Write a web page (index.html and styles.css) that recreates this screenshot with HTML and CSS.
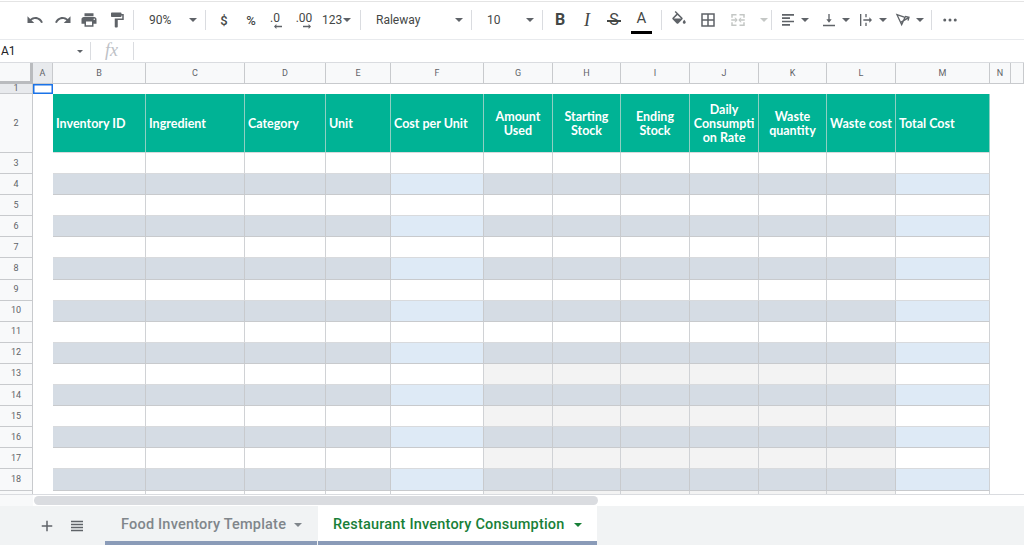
FILE: index.html
```html
<!DOCTYPE html>
<html lang="en">
<head>
	<meta charset="UTF-8">
	<title>Restaurant Inventory Consumption</title>
	<link rel="stylesheet" href="styles.css">
</head>
<body>
	<div class="toolbar">
		<span class="tb w28"><svg viewBox="0 0 24 24" class="ico"><path d="M12.5 8c-2.65 0-5.05.99-6.9 2.6L2 7v9h9l-3.62-3.62c1.39-1.16 3.16-1.88 5.12-1.88 3.54 0 6.55 2.31 7.6 5.5l2.37-.78C21.08 11.03 17.15 8 12.5 8z"/></svg></span>
		<span class="tb w28"><svg viewBox="0 0 24 24" class="ico"><path d="M18.4 10.6C16.55 8.99 14.15 8 11.5 8c-4.65 0-8.58 3.03-9.96 7.22L3.9 16c1.05-3.19 4.05-5.5 7.6-5.5 1.95 0 3.73.72 5.12 1.88L13 16h9V7l-3.6 3.6z"/></svg></span>
		<span class="tb w24"><svg viewBox="0 0 24 24" class="ico"><path d="M19 8H5c-1.66 0-3 1.34-3 3v6h4v4h12v-4h4v-6c0-1.66-1.34-3-3-3zm-3 11H8v-5h8v5zm3-7c-.55 0-1-.45-1-1s.45-1 1-1 1 .45 1 1-.45 1-1 1zm-1-9H6v4h12V3z"/></svg></span>
		<span class="tb w32"><svg viewBox="0 0 24 24" class="ico"><path d="M18 4V3c0-.55-.45-1-1-1H5c-.55 0-1 .45-1 1v4c0 .55.45 1 1 1h12c.55 0 1-.45 1-1V6h1v4H9v11c0 .55.45 1 1 1h2c.55 0 1-.45 1-1v-9h8V4h-3z"/></svg></span>
		<span class="sep"></span>
		<span class="tb drop w72">90%<i class="caret"></i></span>
		<span class="sep"></span>
		<span class="tb w36 sym">$</span>
		<span class="tb w18 sym">%</span>
		<span class="tb w30 dec">.0<svg viewBox="0 0 10 6" class="dec-arrow left"><path d="M0 3l3-3v2h7v2H3v2z"/></svg></span>
		<span class="tb w28 dec">.00<svg viewBox="0 0 10 6" class="dec-arrow right"><path d="M10 3L7 0v2H0v2h7v2z"/></svg></span>
		<span class="tb w42 num">123<i class="caret"></i></span>
		<span class="sep"></span>
		<span class="tb drop w110">Raleway<i class="caret"></i></span>
		<span class="sep"></span>
		<span class="tb drop w70">10<i class="caret"></i></span>
		<span class="sep"></span>
		<span class="tb w34 letter bold">B</span>
		<span class="tb w20 letter slant">I</span>
		<span class="tb w34 letter strike">S</span>
		<span class="tb w21 letter color">A</span>
		<span class="sep gap9"></span>
		<span class="tb w34"><svg viewBox="0 0 24 24" class="ico"><path d="M16.56 8.94L7.62 0 6.21 1.41l2.38 2.38-5.15 5.15c-.59.59-.59 1.54 0 2.12l5.5 5.5c.29.29.68.44 1.06.44s.77-.15 1.06-.44l5.5-5.5c.59-.58.59-1.53 0-2.12zM5.21 10L10 5.21 14.79 10H5.21zM19 11.5s-2 2.17-2 3.5c0 1.1.9 2 2 2s2-.9 2-2c0-1.33-2-3.5-2-3.5z"/></svg></span>
		<span class="tb w24"><svg viewBox="0 0 24 24" class="ico"><path d="M3 3v18h18V3H3zm8 16H5v-6h6v6zm0-8H5V5h6v6zm8 8h-6v-6h6v6zm0-8h-6V5h6v6z"/></svg></span>
		<span class="tb w36"><svg viewBox="0 0 24 24" class="ico off"><path d="M3 4h7v2H5v3H3zM14 4h7v5h-2V6h-5zM3 15h2v3h5v2H3zM19 15h2v5h-7v-2h5zM3 11h6l-2-2h2l2.500 3L9 15H7l2-2H3zM21 11h-6l2-2h-2l-2.500 3 2.500 3h2l-2-2h6z"/></svg></span>
		<span class="tb w15"><i class="caret off"></i></span>
		<span class="sep"></span>
		<span class="tb w41 pair"><svg viewBox="0 0 24 24" class="ico"><path d="M3 3h18v2.500H3zM3 8h12v2.500H3zM3 13h18v2.500H3zM3 18h12v2.500H3z"/></svg><i class="caret"></i></span>
		<span class="tb w37 pair"><svg viewBox="0 0 24 24" class="ico"><path d="M3 19h18v2.500H3zM11 3h2v8h3l-4 5-4-5h3z"/></svg><i class="caret"></i></span>
		<span class="tb w37 pair"><svg viewBox="0 0 24 24" class="ico"><path d="M3 3h2v18H3zM11 3h2v5h-2zM11 16h2v5h-2zM8 11h9V8l4 4-4 4v-3H8z"/></svg><i class="caret"></i></span>
		<span class="tb w44 pair"><svg viewBox="0 0 24 24" class="ico line"><path d="M15 8L3 4l7 15zM8 16L21 8M15 6.500L21 8l-1.500 5"/></svg><i class="caret"></i></span>
		<span class="sep"></span>
		<span class="tb w36"><svg viewBox="0 0 24 24" class="ico"><circle cx="5" cy="12" r="2"/><circle cx="12" cy="12" r="2"/><circle cx="19" cy="12" r="2"/></svg></span>
	</div>

	<div class="formula">
		<span class="name-box">A1<i class="caret small"></i></span>
		<span class="fx">fx</span>
	</div>

	<div class="sheet">
		<table class="grid">
			<colgroup>
				<col class="c-head"><col class="c-a"><col class="c-b"><col class="c-c"><col class="c-d"><col class="c-e"><col class="c-f"><col class="c-g"><col class="c-h"><col class="c-i"><col class="c-j"><col class="c-k"><col class="c-l"><col class="c-m"><col class="c-n"><col class="c-rest">
			</colgroup>
			<thead>
				<tr><th class="corner"></th><th class="on">A</th><th>B</th><th>C</th><th>D</th><th>E</th><th>F</th><th>G</th><th>H</th><th>I</th><th>J</th><th>K</th><th>L</th><th>M</th><th>N</th><th></th></tr>
			</thead>
			<tbody>
				<tr class="first"><th class="on">1</th><td class="sel"></td><td></td><td></td><td></td><td></td><td></td><td></td><td></td><td></td><td></td><td></td><td></td><td></td><td></td><td></td></tr>
				<tr class="title"><th>2</th><td></td><td>Inventory ID</td><td>Ingredient</td><td>Category</td><td>Unit</td><td>Cost per Unit</td><td class="mid">Amount Used</td><td class="mid">Starting Stock</td><td class="mid">Ending Stock</td><td class="mid">Daily Consumpti on Rate</td><td class="mid">Waste quantity</td><td class="mid">Waste cost</td><td>Total Cost</td><td></td><td></td></tr>
				<tr><th>3</th><td></td><td></td><td></td><td></td><td></td><td></td><td></td><td></td><td></td><td></td><td></td><td></td><td></td><td></td><td></td></tr>
				<tr><th>4</th><td></td><td></td><td></td><td></td><td></td><td></td><td></td><td></td><td></td><td></td><td></td><td></td><td></td><td></td><td></td></tr>
				<tr><th>5</th><td></td><td></td><td></td><td></td><td></td><td></td><td></td><td></td><td></td><td></td><td></td><td></td><td></td><td></td><td></td></tr>
				<tr><th>6</th><td></td><td></td><td></td><td></td><td></td><td></td><td></td><td></td><td></td><td></td><td></td><td></td><td></td><td></td><td></td></tr>
				<tr><th>7</th><td></td><td></td><td></td><td></td><td></td><td></td><td></td><td></td><td></td><td></td><td></td><td></td><td></td><td></td><td></td></tr>
				<tr><th>8</th><td></td><td></td><td></td><td></td><td></td><td></td><td></td><td></td><td></td><td></td><td></td><td></td><td></td><td></td><td></td></tr>
				<tr><th>9</th><td></td><td></td><td></td><td></td><td></td><td></td><td></td><td></td><td></td><td></td><td></td><td></td><td></td><td></td><td></td></tr>
				<tr><th>10</th><td></td><td></td><td></td><td></td><td></td><td></td><td></td><td></td><td></td><td></td><td></td><td></td><td></td><td></td><td></td></tr>
				<tr><th>11</th><td></td><td></td><td></td><td></td><td></td><td></td><td></td><td></td><td></td><td></td><td></td><td></td><td></td><td></td><td></td></tr>
				<tr><th>12</th><td></td><td></td><td></td><td></td><td></td><td></td><td></td><td></td><td></td><td></td><td></td><td></td><td></td><td></td><td></td></tr>
				<tr><th>13</th><td></td><td></td><td></td><td></td><td></td><td></td><td></td><td></td><td></td><td></td><td></td><td></td><td></td><td></td><td></td></tr>
				<tr><th>14</th><td></td><td></td><td></td><td></td><td></td><td></td><td></td><td></td><td></td><td></td><td></td><td></td><td></td><td></td><td></td></tr>
				<tr><th>15</th><td></td><td></td><td></td><td></td><td></td><td></td><td></td><td></td><td></td><td></td><td></td><td></td><td></td><td></td><td></td></tr>
				<tr><th>16</th><td></td><td></td><td></td><td></td><td></td><td></td><td></td><td></td><td></td><td></td><td></td><td></td><td></td><td></td><td></td></tr>
				<tr><th>17</th><td></td><td></td><td></td><td></td><td></td><td></td><td></td><td></td><td></td><td></td><td></td><td></td><td></td><td></td><td></td></tr>
				<tr><th>18</th><td></td><td></td><td></td><td></td><td></td><td></td><td></td><td></td><td></td><td></td><td></td><td></td><td></td><td></td><td></td></tr>
				<tr><th></th><td></td><td></td><td></td><td></td><td></td><td></td><td></td><td></td><td></td><td></td><td></td><td></td><td></td><td></td><td></td></tr>
			</tbody>
		</table>
	</div>

	<div class="scroll-strip"><span class="scroll-head"></span><span class="thumb"></span></div>

	<div class="tabs">
		<span class="tab-tool plus"><svg viewBox="0 0 24 24" class="ico"><path d="M19 13h-6v6h-2v-6H5v-2h6V5h2v6h6z"/></svg></span>
		<span class="tab-tool list"><svg viewBox="0 0 24 24" class="ico"><path d="M4 5h16v2H4zM4 9h16v2H4zM4 13h16v2H4zM4 17h16v2H4z"/></svg></span>
		<span class="tab">Food Inventory Template<i class="caret"></i></span>
		<span class="tab active">Restaurant Inventory Consumption<i class="caret"></i></span>
	</div>
</body>
</html>
```

FILE: styles.css
```css
html, body {
	margin: 0;
	height: 545px;
	overflow: hidden;
	background: #fff;
	font-family: Roboto, "Liberation Sans", sans-serif;
	color: #444746;
}
body {
	display: flex;
	flex-direction: column;
}

/* toolbar */
.toolbar {
	display: flex;
	align-items: center;
	height: 36px;
	flex: none;
	margin-top: 1px;
	padding: 0 0 1px 21px;
	border-top: 1px solid #e4e4e4;
	border-bottom: 1px solid #e8eaed;
	box-sizing: content-box;
	font-size: 12px;
}
.tb {
	display: flex;
	align-items: center;
	justify-content: center;
	flex: none;
	height: 24px;
	color: #444746;
}
.w15 { width: 15px; }
.w18 { width: 18px; }
.w20 { width: 20px; }
.w21 { width: 21px; }
.w24 { width: 24px; }
.w28 { width: 28px; }
.w30 { width: 30px; }
.w32 { width: 32px; }
.w34 { width: 34px; }
.w36 { width: 36px; }
.w37 { width: 37px; }
.w41 { width: 41px; }
.w42 { width: 42px; }
.w44 { width: 44px; }
.w70 { width: 70px; }
.w72 { width: 71px; }
.w110 { width: 110px; }
.ico {
	width: 18px;
	height: 18px;
	fill: #5f6368;
}
.ico.off {
	fill: #c4c7c5;
}
.ico.line {
	fill: none;
	stroke: #5f6368;
	stroke-width: 2;
}
.sep {
	flex: none;
	width: 1px;
	height: 20px;
	background: #dadce0;
}
.sep.gap9 {
	margin-left: 9px;
}
.caret {
	display: inline-block;
	width: 0;
	height: 0;
	border-left: 4px solid transparent;
	border-right: 4px solid transparent;
	border-top: 4px solid #5f6368;
}
.caret.off {
	border-top-color: #c4c7c5;
}
.caret.small {
	border-left-width: 3px;
	border-right-width: 3px;
	border-top-width: 3px;
}
.drop {
	justify-content: space-between;
	padding: 0 8px 0 15px;
	box-sizing: border-box;
}
.sym {
	font-size: 13px;
	font-weight: 500;
}
.dec {
	flex-direction: column;
	font-size: 12px;
	line-height: 12px;
	font-weight: 400;
}
.dec-arrow {
	width: 8px;
	height: 5px;
	fill: #5f6368;
}
.dec-arrow.left {
	margin-left: 6px;
}
.dec-arrow.right {
	margin-left: 6px;
}
.num {
	justify-content: flex-start;
	gap: 1px;
	padding-left: 4px;
	box-sizing: border-box;
}
.letter {
	font-size: 15px;
	line-height: 18px;
}
.bold {
	font-size: 16px;
	font-weight: 700;
}
.slant {
	font-family: "Liberation Serif", serif;
	font-style: italic;
	font-size: 18px;
	font-weight: 400;
}
.strike {
	position: relative;
	font-size: 16px;
}
.strike::after {
	content: "";
	position: absolute;
	left: 10px;
	right: 10px;
	top: 12px;
	height: 1.500px;
	background: #444746;
}
.color {
	height: 24px;
	margin-top: 4px;
	align-items: flex-start;
	border-bottom: 3px solid #000;
	box-sizing: border-box;
	line-height: 16px;
}
.pair {
	justify-content: flex-start;
	gap: 5px;
	padding-left: 8px;
	box-sizing: border-box;
}
.pair .ico {
	width: 16px;
	height: 16px;
}

/* formula bar */
.formula {
	display: flex;
	align-items: center;
	flex: none;
	height: 22px;
	border-bottom: 1px solid #dadce0;
	font-size: 12px;
	color: #202124;
}
.name-box {
	display: flex;
	align-items: center;
	justify-content: space-between;
	width: 91px;
	height: 18px;
	padding: 0 7px 0 1px;
	box-sizing: border-box;
	border-right: 1px solid #dadce0;
}
.fx {
	width: 43px;
	height: 18px;
	box-sizing: border-box;
	padding-left: 14px;
	border-right: 1px solid #dadce0;
	font-family: "Liberation Serif", serif;
	font-style: italic;
	font-size: 18px;
	line-height: 16px;
	color: #bdc1c6;
}

/* grid */
.sheet {
	flex: none;
	height: 432px;
	overflow: hidden;
	border-bottom: 1px solid #dadce0;
	box-sizing: border-box;
}
.grid {
	table-layout: fixed;
	width: 1024px;
	border-collapse: separate;
	border-spacing: 0;
}
.c-head { width: 33px; }
.c-a { width: 20px; }
.c-b { width: 93px; }
.c-c { width: 99px; }
.c-d { width: 81px; }
.c-e { width: 65px; }
.c-f { width: 93px; }
.c-g { width: 69px; }
.c-h { width: 68px; }
.c-i { width: 69px; }
.c-j { width: 69px; }
.c-k { width: 68px; }
.c-l { width: 69px; }
.c-m { width: 94px; }
.c-n { width: 21px; }
.c-rest { width: 13px; }
th {
	padding: 0;
	box-sizing: border-box;
	background: #f8f9fa;
	border-right: 1px solid #c8cacd;
	border-bottom: 1px solid #c8cacd;
	font-size: 9px;
	font-weight: 400;
	line-height: 9px;
	color: #5f6368;
	text-align: center;
}
th.on {
	background: #e8eaed;
}
thead tr {
	height: 21px;
}
thead th.corner {
	border-right: 3px solid #b9bbbe;
	border-bottom: 3px solid #b9bbbe;
}
tbody tr {
	height: 21.100px;
}
tbody tr.first {
	height: 10px;
}
tbody tr.title {
	height: 59px;
}
td {
	padding: 0;
	box-sizing: border-box;
}
tbody tr:nth-child(n+2) td:nth-child(n+3):nth-child(-n+14) {
	border-right: 1px solid #d0d2d5;
	border-bottom: 1px solid #d8dadd;
}
tbody tr:nth-child(2n+4) td:nth-child(n+3):nth-child(-n+13) {
	background: #d5dce4;
	border-right-color: #c8cacd;
	border-bottom-color: #c8cacd;
}
tbody tr:nth-child(2n+4) td:nth-child(n+7):nth-child(-n+7),
tbody tr:nth-child(2n+4) td:nth-child(n+14):nth-child(-n+14) {
	background: #deeaf6;
	border-bottom-color: #c8cacd;
}
tbody tr:nth-child(n+13):nth-child(odd) td:nth-child(n+8):nth-child(-n+13) {
	background: #f3f3f3;
}
td.sel {
	box-shadow: inset 0 0 0 1.500px #1a73e8;
}
tbody tr.title td:nth-child(n+3):nth-child(-n+14) {
	background: #00b395;
	padding: 2px 3px 0;
	border-right-color: #8fcfc2;
	font-family: Lato, "Liberation Sans", sans-serif;
	font-size: 12.500px;
	font-weight: 700;
	line-height: 14px;
	color: #fff;
}
tbody tr.title td.mid {
	text-align: center;
}

/* bottom */
.scroll-strip {
	display: flex;
	flex: none;
	align-items: center;
	height: 11px;
	background: #fff;
}
.scroll-head {
	align-self: stretch;
	width: 33px;
	background: #f8f9fa;
}
.thumb {
	width: 564px;
	height: 9px;
	margin-left: 1px;
	border-radius: 5px;
	background: #dadce0;
}
.tabs {
	display: flex;
	flex: 1;
	background: #f1f3f4;
	font-size: 14.500px;
	font-weight: 500;
	letter-spacing: .2px;
}
.tab-tool {
	display: flex;
	align-items: center;
	justify-content: center;
	width: 31px;
}
.tab-tool.plus {
	margin-left: 31px;
	margin-right: -1px;
}
.tab-tool.list {
	margin-right: 13px;
}
.tab {
	display: flex;
	align-items: center;
	justify-content: space-between;
	width: 212px;
	padding: 2px 15px 0 16px;
	box-sizing: border-box;
	border-bottom: 4px solid #8a9bb8;
	color: #80868b;
}
.tab .caret {
	border-top-color: #80868b;
}
.tab.active {
	width: 279px;
	margin-left: 1px;
	padding-left: 15px;
	background: #fff;
	color: #188038;
}
.tab.active .caret {
	border-top-color: #188038;
}
```
